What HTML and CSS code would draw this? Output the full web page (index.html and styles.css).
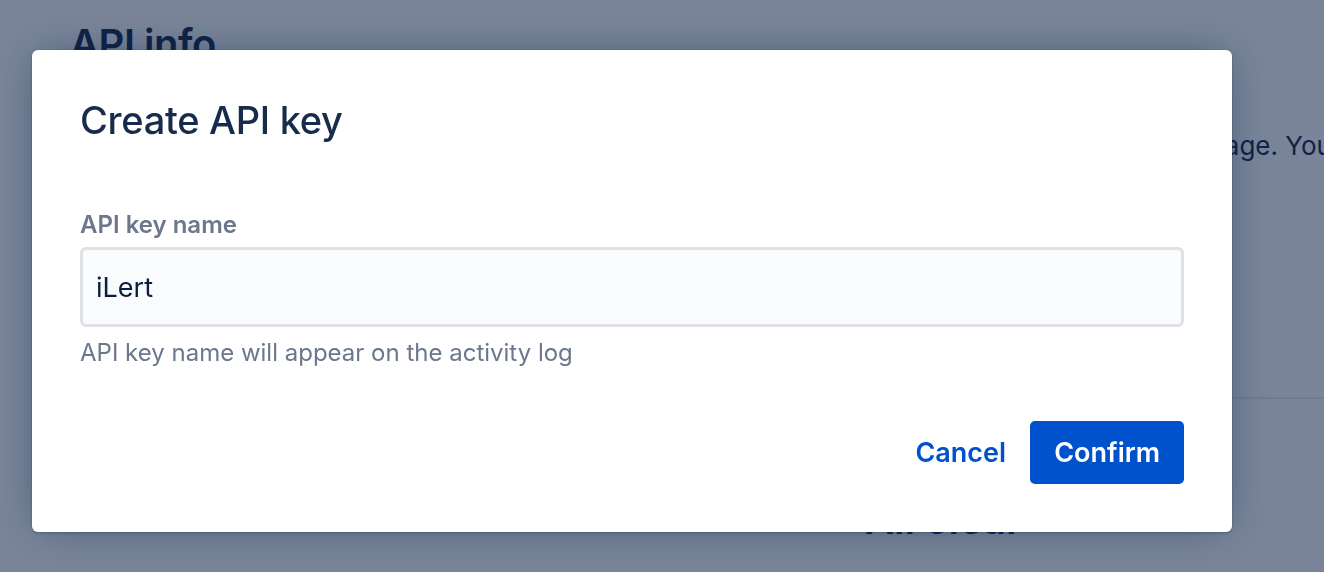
FILE: index.html
```html
<!DOCTYPE html>
<html lang="en">
<head>
<meta charset="utf-8">
<title>Create API key</title>
<link rel="stylesheet" href="styles.css">
</head>
<body>
<div class="page">
  <h1 class="page-title">API info</h1>
  <p class="page-text">Use an API key to read and update the components, incidents and the metrics of your status page. You can create keys here.</p>
  <div class="page-spacer"></div>
  <hr class="page-rule">
  <div class="page-lower">
    <div class="page-col"></div>
    <h2 class="page-subtitle">All clear</h2>
  </div>
</div>

<div class="blanket"></div>

<div class="modal" role="dialog" aria-labelledby="modal-title">
  <h2 class="modal-title" id="modal-title">Create API key</h2>
  <div class="field">
    <label class="field-label" for="key-name">API key name</label>
    <div class="field-input">
      <input id="key-name" class="input" type="text" value="iLert">
    </div>
    <div class="field-help">API key name will appear on the activity log</div>
  </div>
  <div class="modal-footer">
    <button class="btn btn-link" type="button">Cancel</button>
    <button class="btn btn-primary" type="button">Confirm</button>
  </div>
</div>
</body>
</html>
```

FILE: styles.css
```css
* { box-sizing: border-box; }
html, body {
  margin: 0;
  padding: 0;
  width: 1324px;
  height: 572px;
  overflow: hidden;
  background: #ffffff;
  font-family: Inter, "Noto Sans", "Liberation Sans", sans-serif;
  color: #172b4d;
}

.page {
  padding: 20px 0 0 70px;
  width: 1324px;
  height: 572px;
  overflow: hidden;
}
.page-title {
  margin: 0;
  font-size: 40px;
  font-weight: 600;
  line-height: 48px;
  letter-spacing: -0.5px;
  color: #172b4d;
}
.page-text {
  margin: 60px 0 0 0;
  font-size: 26px;
  line-height: 36px;
  white-space: nowrap;
  overflow: hidden;
  color: #172b4d;
}
.page-spacer { height: 233px; }
.page-rule {
  margin: 0;
  border: 0;
  border-top: 2px solid #ebecf0;
}
.page-lower {
  display: flex;
  padding-top: 97px;
}
.page-col { width: 795px; flex: none; }
.page-subtitle {
  margin: 0;
  font-size: 40px;
  font-weight: 600;
  line-height: 48px;
  color: #172b4d;
}

.blanket {
  position: fixed;
  inset: 0;
  background: rgba(9, 30, 66, 0.54);
}

.modal {
  position: fixed;
  left: 32px;
  top: 50px;
  width: 1200px;
  height: 482px;
  background: #ffffff;
  border-radius: 6px;
  box-shadow: 0 0 0 1px rgba(9, 30, 66, 0.08), 0 2px 2px rgba(9, 30, 66, 0.12), 0 0 40px -6px rgba(9, 30, 66, 0.45);
  padding: 44px 48px 48px 48px;
  display: flex;
  flex-direction: column;
}
.modal-title {
  margin: 0;
  font-size: 38px;
  font-weight: 500;
  line-height: 52px;
  letter-spacing: -0.3px;
  color: #172b4d;
}

.field {
  margin-top: 65px;
  display: flex;
  flex-direction: column;
}
.field-label {
  font-size: 24px;
  font-weight: 600;
  line-height: 28px;
  color: #6b778c;
}
.field-input {
  margin-top: 8px;
  height: 80px;
  border: 3px solid #dfe1e6;
  border-radius: 6px;
  background: #fafbfc;
  display: flex;
  align-items: center;
  padding: 0 13px;
}
.input {
  width: 100%;
  border: 0;
  outline: none;
  background: transparent;
  font-family: inherit;
  font-size: 27px;
  color: #091e42;
  padding: 0;
}
.field-help {
  margin-top: 12px;
  font-size: 24px;
  line-height: 28px;
  color: #6b778c;
}

.modal-footer {
  margin-top: auto;
  display: flex;
  justify-content: flex-end;
  align-items: center;
  gap: 0;
}
.btn {
  height: 63px;
  border: 0;
  border-radius: 5px;
  font-family: inherit;
  font-size: 27px;
  font-weight: 600;
  padding: 0 24px;
  cursor: pointer;
}
.btn-link {
  background: transparent;
  color: #0052cc;
  padding: 0 24px;
}
.btn-primary {
  background: #0052cc;
  color: #ffffff;
}
```
